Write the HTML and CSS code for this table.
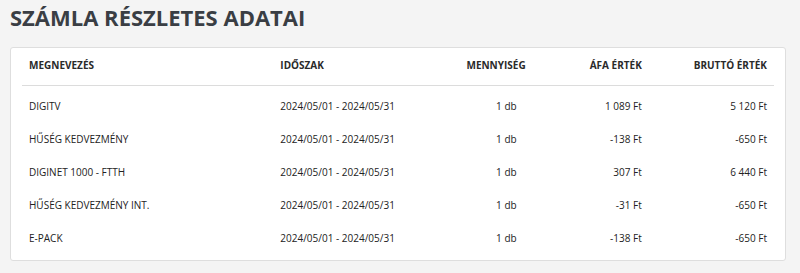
FILE: index.html
```html
<!DOCTYPE html>
<html lang="hu">
<head>
  <meta charset="UTF-8">
  <meta name="viewport" content="width=device-width, initial-scale=1.0">
  <title>Számla részletes adatai</title>
  <link rel="stylesheet" href="styles.css">
</head>
<body>
  <h1 class="page-title">Számla részletes adatai</h1>

  <div class="card">
    <table class="items">
      <colgroup>
        <col class="col-name">
        <col class="col-period">
        <col class="col-qty">
        <col class="col-vat">
        <col class="col-gross">
      </colgroup>
      <thead>
        <tr>
          <th>Megnevezés</th>
          <th>Időszak</th>
          <th class="num">Mennyiség</th>
          <th class="num">Áfa érték</th>
          <th class="num">Bruttó érték</th>
        </tr>
      </thead>
      <tbody>
        <tr>
          <td class="name">DIGITV</td>
          <td>2024/05/01 - 2024/05/31</td>
          <td class="num qty">1 db</td>
          <td class="num">1 089 Ft</td>
          <td class="num">5 120 Ft</td>
        </tr>
        <tr>
          <td class="name">Hűség kedvezmény</td>
          <td>2024/05/01 - 2024/05/31</td>
          <td class="num qty">1 db</td>
          <td class="num">-138 Ft</td>
          <td class="num">-650 Ft</td>
        </tr>
        <tr>
          <td class="name">DIGINET 1000 - FTTH</td>
          <td>2024/05/01 - 2024/05/31</td>
          <td class="num qty">1 db</td>
          <td class="num">307 Ft</td>
          <td class="num">6 440 Ft</td>
        </tr>
        <tr>
          <td class="name">Hűség kedvezmény INT.</td>
          <td>2024/05/01 - 2024/05/31</td>
          <td class="num qty">1 db</td>
          <td class="num">-31 Ft</td>
          <td class="num">-650 Ft</td>
        </tr>
        <tr>
          <td class="name">E-PACK</td>
          <td>2024/05/01 - 2024/05/31</td>
          <td class="num qty">1 db</td>
          <td class="num">-138 Ft</td>
          <td class="num">-650 Ft</td>
        </tr>
      </tbody>
    </table>
  </div>
</body>
</html>
```

FILE: styles.css
```css
body {
  font-family: 'Open Sans', 'Liberation Sans', sans-serif;
  background-color: #f4f4f4;
  margin: 0;
  padding: 0;
  color: #222;
}
.page-title {
  margin: 0 0 17px 10px;
  padding-top: 4px;
  font-size: 22px;
  line-height: 26px;
  font-weight: 700;
  text-transform: uppercase;
  color: #3a3e44;
}
.card {
  box-sizing: border-box;
  width: 776px;
  margin-left: 10px;
  padding: 0 11px 5px;
  background: white;
  border: 1px solid #dedede;
  border-radius: 3px;
}
.items {
  width: 100%;
  border-collapse: collapse;
  table-layout: fixed;
  font-size: 10px;
  line-height: 13px;
}
.col-name { width: 251px; }
.col-period { width: 167px; }
.col-qty { width: 92px; }
.col-vat { width: 116px; }
.col-gross { width: 125px; }
.items th {
  padding: 11px 7px 13px;
  text-align: left;
  font-weight: 700;
  text-transform: uppercase;
  color: #2a2a2a;
  border-bottom: 1px solid #dcdcdc;
}
.items td {
  padding: 10px 7px;
  color: #222;
  white-space: nowrap;
}
.items tbody tr:first-child td {
  padding-top: 14px;
}
.items td.name {
  text-transform: uppercase;
}
.items .num {
  text-align: right;
}
.items td.qty {
  padding-right: 16px;
}
```
